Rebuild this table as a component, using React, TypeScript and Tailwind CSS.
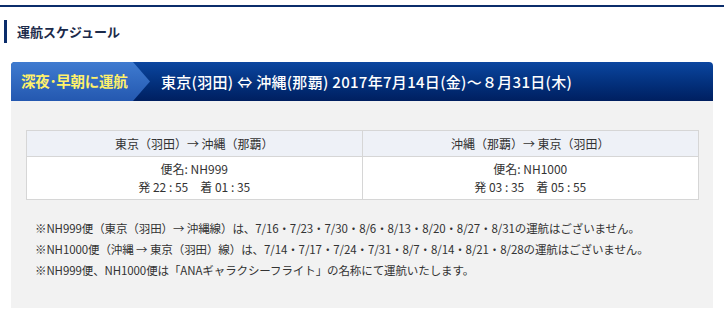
import React from "react";

const jp = { fontFamily: '"Noto Sans CJK JP", "Noto Sans", sans-serif' };

export default function App() {
  return (
    <div className="w-[724px] h-[316px] bg-white relative overflow-hidden text-[#333]" style={jp}>
      <div className="pt-[5px]">
        <div className="h-[2px] bg-[#0b2d6b]" />
      </div>
      <div className="mt-[13px] ml-[4px] h-[23px] border-l-[3px] border-[#0b2d6b] pl-[10px] flex items-center">
        <span className="text-[13px] font-bold text-[#1b2a4a] leading-none">運航スケジュール</span>
      </div>
      <div className="mx-[11px] mt-[19px]">
        <div className="relative h-[39px] rounded-t-[4px] overflow-hidden bg-gradient-to-b from-[#0c46a0] to-[#001f60] flex items-center">
          <div className="absolute left-0 top-0 h-full w-[139px] bg-gradient-to-b from-[#3f7bd0] to-[#2458b0] [clip-path:polygon(0_0,122px_0,139px_50%,122px_100%,0_100%)]" />
          <div className="relative w-[139px] pl-[10px] flex items-center">
            <span className="text-[14.5px] font-bold text-[#fff16a] leading-none tracking-[-0.3px]">深夜･早朝に運航</span>
          </div>
          <span className="relative ml-[11px] text-[15px] font-medium text-white leading-none tracking-[0.3px]">東京(羽田) ⇔ 沖縄(那覇) 2017年7月14日(金)～８月31日(木)</span>
        </div>
        <div className="bg-[#f2f2f2] h-[207px] pt-[29px] px-[15px]">
          <div className="grid grid-cols-2 border border-[#d6d6d6] bg-white text-[12px] text-[#333] w-[673px]">
            <div className="h-[26px] bg-[#eef1f7] border-b border-r border-[#d6d6d6] flex items-center justify-center">東京（羽田）→ 沖縄（那覇）</div>
            <div className="h-[26px] bg-[#eef1f7] border-b border-[#d6d6d6] flex items-center justify-center">沖縄（那覇）→ 東京（羽田）</div>
            <div className="h-[42px] border-r border-[#d6d6d6] flex flex-col items-center justify-center leading-[18px]">
              <div>便名: NH999</div>
              <div>発 22 : 55　着 01 : 35</div>
            </div>
            <div className="h-[42px] flex flex-col items-center justify-center leading-[18px]">
              <div>便名: NH1000</div>
              <div>発 03 : 35　着 05 : 55</div>
            </div>
          </div>
          <div className="mt-[18px] ml-[9px] text-[11.5px] leading-[21px] text-[#333] tracking-[-0.1px]">
            <div>※NH999便（東京（羽田）→ 沖縄線）は、7/16・7/23・7/30・8/6・8/13・8/20・8/27・8/31の運航はございません。</div>
            <div>※NH1000便（沖縄 → 東京（羽田）線）は、7/14・7/17・7/24・7/31・8/7・8/14・8/21・8/28の運航はございません。</div>
            <div>※NH999便、NH1000便は「ANAギャラクシーフライト」の名称にて運航いたします。</div>
          </div>
        </div>
      </div>
    </div>
  );
}
